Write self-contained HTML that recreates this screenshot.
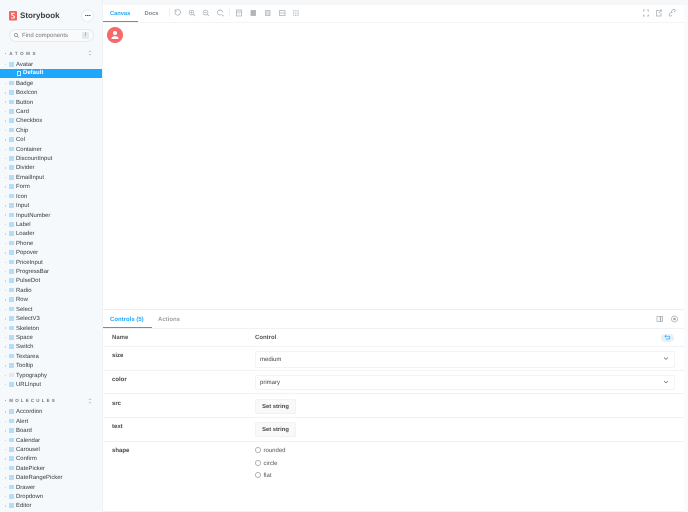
<!DOCTYPE html>
<html><head><meta charset="utf-8">
<style>
html,body{margin:0;padding:0;width:688px;height:512px;overflow:hidden;background:#fff}
#w{position:absolute;left:0;top:0;width:688px;height:512px;overflow:hidden;background:#fff;font-family:"Liberation Sans",sans-serif;color:#333;filter:blur(.35px);text-rendering:geometricPrecision}
*{box-sizing:border-box}
#s{position:absolute;left:0;top:0;width:103px;height:512px;background:#f6f9fc;border-right:1px solid #eef2f5;overflow:hidden}
.r{position:absolute;left:0;width:102px;height:9.4px;line-height:9.4px;font-size:5.95px;color:#333a40}
.r span{position:absolute;left:16px;top:1.7px;white-space:nowrap}
.r i{position:absolute;left:9.2px;top:2.7px;width:4.6px;height:4.6px;background:#b5ddf8;border-radius:.5px}
.r b{position:absolute;left:4.5px;top:4.5px;width:1.5px;height:1.5px;background:#c4ced5;border-radius:50%}
.h{position:absolute;left:9.3px;font-size:4.5px;font-weight:bold;color:#6d757c;white-space:nowrap}
.t{position:absolute;font-size:6px;white-space:nowrap}
.b{font-weight:bold;color:#444}
svg{position:absolute;overflow:visible}
.ln{position:absolute;background:#f0f2f4;height:1px}
.sel{position:absolute;left:255px;width:420px;height:17px;border:1px solid #f2f3f4;border-radius:2px;background:#fff;font-size:6px;line-height:16px;padding-left:4px;color:#444}
.btn{position:absolute;left:255px;width:41px;height:15px;border:1px solid #f1f2f3;border-radius:2px;background:#f9f9f9;font-size:5.8px;font-weight:bold;text-align:center;line-height:14.5px;color:#444}
.rad{position:absolute;width:6px;height:6px;border:.7px solid #b0b0b0;border-radius:50%;background:#fff}
</style></head><body><div id="w">
<div id="s">
<svg style="left:9px;top:10.7px" width="8" height="9.5" viewBox="0 0 8 9.5"><rect width="8" height="9.5" rx="1" fill="#f4645f"/><path d="M5.6 2.6C4.8 1.9 2.6 1.9 2.6 3.3c0 1.6 2.9 1 2.9 2.7 0 1.500-2.300 1.300-3.300.6" fill="none" stroke="#fff" stroke-width="1"/></svg>
<div class="t" style="left:20px;top:10px;font-size:8px;line-height:11px;font-weight:bold;color:#3a3a3a">Storybook</div>
<div style="position:absolute;left:81px;top:9px;width:13px;height:13px;border-radius:50%;background:#fff;border:1px solid #e8ecef"></div>
<div style="position:absolute;left:85px;top:14.7px;width:5.5px;height:1.5px;border-radius:1px;background:repeating-linear-gradient(90deg,#555 0 1.3px,transparent 1.3px 2.1px)"></div>
<div style="position:absolute;left:9px;top:29px;width:85px;height:12.5px;border-radius:7px;background:#f8fafc;border:1px solid #e6eaed"></div>
<svg style="left:13.5px;top:32.5px" width="5" height="5" viewBox="0 0 5 5"><circle cx="2" cy="2" r="1.6" fill="none" stroke="#777" stroke-width=".6"/><path d="M3.2 3.2L4.7 4.7" stroke="#777" stroke-width=".6"/></svg>
<div class="t" style="left:22px;top:31.5px;line-height:8px;color:#777">Find components</div>
<div style="position:absolute;left:82px;top:32px;width:7px;height:6.5px;background:#e6e8ea;border-radius:1px;font-size:5px;line-height:6.5px;text-align:center;color:#666">/</div>

<div style="position:absolute;left:4.5px;top:52.5px;width:1.4px;height:1px;background:#aab"></div>
<div class="h" style="top:50.5px;line-height:6px;letter-spacing:2.6px">ATOMS</div>
<svg style="left:87.5px;top:50px" width="4" height="6" viewBox="0 0 4 6"><path d="M.8 2L2 .8 3.2 2M.8 4L2 5.2 3.2 4" fill="none" stroke="#888" stroke-width=".5"/></svg>

<div class="r" style="top:59.3px"><b></b><i></i><span>Avatar</span></div>
<div style="position:absolute;left:0;top:68.7px;width:102px;height:9.4px;background:#1ea7fd"></div>
<div style="position:absolute;left:16.5px;top:71.2px;width:4px;height:4.4px;border:.7px solid #d0ecff"></div>
<div class="t" style="left:23px;top:70.3px;line-height:7px;color:#fff;font-weight:bold">Default</div>
<div class="r" style="top:78.1px"><b></b><i></i><span>Badge</span></div>
<div class="r" style="top:87.5px"><b></b><i></i><span>BoxIcon</span></div>
<div class="r" style="top:96.9px"><b></b><i></i><span>Button</span></div>
<div class="r" style="top:106.4px"><b></b><i></i><span>Card</span></div>
<div class="r" style="top:115.8px"><b></b><i></i><span>Checkbox</span></div>
<div class="r" style="top:125.2px"><b></b><i></i><span>Chip</span></div>
<div class="r" style="top:134.6px"><b></b><i></i><span>Col</span></div>
<div class="r" style="top:144px"><b></b><i></i><span>Container</span></div>
<div class="r" style="top:153.4px"><b></b><i></i><span>DiscountInput</span></div>
<div class="r" style="top:162.8px"><b></b><i></i><span>Divider</span></div>
<div class="r" style="top:172.3px"><b></b><i></i><span>EmailInput</span></div>
<div class="r" style="top:181.7px"><b></b><i></i><span>Form</span></div>
<div class="r" style="top:191.1px"><b></b><i></i><span>Icon</span></div>
<div class="r" style="top:200.5px"><b></b><i></i><span>Input</span></div>
<div class="r" style="top:209.9px"><b></b><i></i><span>InputNumber</span></div>
<div class="r" style="top:219.3px"><b></b><i></i><span>Label</span></div>
<div class="r" style="top:228.7px"><b></b><i></i><span>Loader</span></div>
<div class="r" style="top:238.2px"><b></b><i></i><span>Phone</span></div>
<div class="r" style="top:247.6px"><b></b><i></i><span>Popover</span></div>
<div class="r" style="top:257px"><b></b><i></i><span>PriceInput</span></div>
<div class="r" style="top:266.4px"><b></b><i></i><span>ProgressBar</span></div>
<div class="r" style="top:275.8px"><b></b><i></i><span>PulseDot</span></div>
<div class="r" style="top:285.2px"><b></b><i></i><span>Radio</span></div>
<div class="r" style="top:294.6px"><b></b><i></i><span>Row</span></div>
<div class="r" style="top:304.1px"><b></b><i></i><span>Select</span></div>
<div class="r" style="top:313.5px"><b></b><i></i><span>SelectV3</span></div>
<div class="r" style="top:322.9px"><b></b><i></i><span>Skeleton</span></div>
<div class="r" style="top:332.3px"><b></b><i></i><span>Space</span></div>
<div class="r" style="top:341.7px"><b></b><i></i><span>Switch</span></div>
<div class="r" style="top:351.1px"><b></b><i></i><span>Textarea</span></div>
<div class="r" style="top:360.5px"><b></b><i></i><span>Tooltip</span></div>
<div class="r" style="top:370px"><b></b><i style="background:#e6e9ec"></i><span>Typography</span></div>
<div class="r" style="top:379.4px"><b></b><i></i><span>URLInput</span></div>

<div style="position:absolute;left:4.5px;top:399.5px;width:1.4px;height:1px;background:#aab"></div>
<div class="h" style="top:397.5px;line-height:6px;letter-spacing:2.15px">MOLECULES</div>
<svg style="left:87.5px;top:397.5px" width="4" height="6" viewBox="0 0 4 6"><path d="M.8 2L2 .8 3.2 2M.8 4L2 5.2 3.2 4" fill="none" stroke="#888" stroke-width=".5"/></svg>

<div class="r" style="top:406.8px"><b></b><i></i><span>Accordion</span></div>
<div class="r" style="top:416.2px"><b></b><i></i><span>Alert</span></div>
<div class="r" style="top:425.6px"><b></b><i></i><span>Board</span></div>
<div class="r" style="top:435px"><b></b><i></i><span>Calendar</span></div>
<div class="r" style="top:444.4px"><b></b><i></i><span>Carousel</span></div>
<div class="r" style="top:453.8px"><b></b><i></i><span>Confirm</span></div>
<div class="r" style="top:463.2px"><b></b><i></i><span>DatePicker</span></div>
<div class="r" style="top:472.6px"><b></b><i></i><span>DateRangePicker</span></div>
<div class="r" style="top:482px"><b></b><i></i><span>Drawer</span></div>
<div class="r" style="top:491.4px"><b></b><i></i><span>Dropdown</span></div>
<div class="r" style="top:500.8px"><b></b><i></i><span>Editor</span></div>
</div>

<!-- toolbar -->
<div style="position:absolute;left:103px;top:0;width:585px;height:5px;background:#f6f7f9"></div>
<div style="position:absolute;left:103px;top:21.5px;width:585px;height:1.5px;background:#f3f4f5"></div>
<div style="position:absolute;left:684px;top:5px;width:4px;height:507px;background:#fafbfc"></div>
<div class="t" style="left:110px;top:10.5px;line-height:7px;color:#1ea7fd;font-weight:bold;font-size:5.7px">Canvas</div>
<div class="t" style="left:144.5px;top:10.5px;line-height:7px;color:#80868b;font-weight:bold;font-size:5.7px">Docs</div>
<div style="position:absolute;left:103px;top:20.7px;width:35px;height:1.5px;background:#1ea7fd"></div>
<div style="position:absolute;left:168.5px;top:8px;width:1px;height:9px;background:#eef0f2"></div>
<div style="position:absolute;left:229px;top:8px;width:1px;height:9px;background:#eef0f2"></div>
<svg style="left:0;top:0" width="688" height="30" viewBox="0 0 688 30" fill="none" stroke="#a4abb1" stroke-width=".7">
<path d="M175 12a2.800 2.800 0 1 0 1-1.800l-1 .7M175 9.500v1.800h1.800"/>
<circle cx="191.500" cy="12.500" r="2.400"/><path d="M193.300 14.300l1.700 1.700M190.400 12.500h2.200M191.500 11.400v2.200"/>
<circle cx="205.500" cy="12.500" r="2.400"/><path d="M207.300 14.300l1.700 1.700M204.400 12.500h2.200"/>
<path d="M222.500 12.500a2.500 2.500 0 1 0-1 2M222 14.500l1.800 1.700M218.500 10l1 1"/>
<rect x="236.500" y="10" width="5" height="6"/><path d="M236.500 12h5M238.500 14h1"/>
<rect x="251" y="10.500" width="4.500" height="5" fill="#b0b6bb"/>
<rect x="265.500" y="10.500" width="4.500" height="5"/><path d="M266 12h3.500M266 14h3.500"/>
<rect x="279.500" y="10.500" width="5.500" height="5"/><path d="M279.500 13h5.500"/>
<rect x="293.500" y="10.500" width="5" height="5" stroke-dasharray="1 .8"/><path d="M296 10.500v5M293.500 13h5" stroke-dasharray="1 .8"/>
<path d="M643.500 11.500v-1.500h1.500M647 10h1.500v1.500M648.500 14.500v1.500h-1.500M645 16h-1.500v-1.500"/>
<path d="M661 13v3h-4.500v-5.500h3M659 13l2.500-3M660 10h1.500v1.500"/>
<path d="M672 15l-.8.8a1.200 1.200 0 0 1-1.700-1.700l1.200-1.200a1.200 1.200 0 0 1 1.700 0M674 12l.8-.8a1.200 1.200 0 0 0-1.700-1.700l-1.200 1.200a1.200 1.200 0 0 0 0 1.700"/>
</svg>

<!-- avatar -->
<div style="position:absolute;left:107px;top:27px;width:16px;height:16px;border-radius:50%;background:#f8686a"></div>
<svg style="left:107px;top:27px" width="16" height="16" viewBox="0 0 16 16"><circle cx="8" cy="6" r="2" fill="#fff"/><path d="M4.500 12v-.8c0-1.300 1.700-2 3.500-2s3.500.7 3.500 2v.8z" fill="#fff"/></svg>

<!-- panel -->
<div style="position:absolute;left:103px;top:309px;width:581px;height:203px;background:#fff;border-top:1px solid #eceef1"></div>
<div class="ln" style="left:103px;top:327.500px;width:581px"></div>
<div style="position:absolute;left:103px;top:326.500px;width:48.500px;height:1.500px;background:#1ea7fd"></div>
<div class="t" style="left:110px;top:315.500px;line-height:8px;color:#1ea7fd;font-weight:bold">Controls (5)</div>
<div class="t" style="left:158px;top:315.500px;line-height:8px;color:#a0a0a0;font-weight:bold">Actions</div>
<svg style="left:0;top:0" width="688" height="330" viewBox="0 0 688 330" fill="none" stroke="#a4abb1" stroke-width=".7">
<rect x="657" y="316.500" width="5.500" height="5"/><path d="M660.500 316.500v5" stroke-width="1.300"/>
<circle cx="674.500" cy="319" r="3"/><circle cx="674.500" cy="319" r="1.300" fill="#a0a6ab" stroke="none"/>
</svg>

<div class="t b" style="left:112px;top:333.500px;line-height:8px;color:#555">Name</div>
<div class="t b" style="left:255px;top:333.500px;line-height:8px;color:#555">Control</div>
<div style="position:absolute;left:661px;top:333.500px;width:13px;height:8px;border-radius:4px;background:#e4f1fa"></div>
<svg style="left:664px;top:335px" width="7" height="5" viewBox="0 0 7 5" fill="none" stroke="#1ea7fd" stroke-width=".7"><path d="M1 1.200h3.500a1.400 1.400 0 0 1 0 2.800H2M2 .2L1 1.200l1 1"/></svg>
<div class="ln" style="left:103px;top:345.500px;width:581px"></div>

<div class="t b" style="left:112px;top:352px;line-height:8px">size</div>
<div class="sel" style="top:350.500px">medium</div>
<div class="ln" style="left:103px;top:369.500px;width:581px"></div>
<div class="t b" style="left:112px;top:376px;line-height:8px">color</div>
<div class="sel" style="top:374.500px;height:15px;line-height:14px">primary</div>
<div class="ln" style="left:103px;top:393px;width:581px"></div>
<svg style="left:0;top:340px" width="688" height="60" viewBox="0 340 688 60" fill="none" stroke="#777" stroke-width=".8"><path d="M664 357.500l2 1.800 2-1.800M664 381l2 1.800 2-1.800"/></svg>

<div class="t b" style="left:112px;top:399.500px;line-height:8px">src</div>
<div class="btn" style="top:398.500px">Set string</div>
<div class="ln" style="left:103px;top:417px;width:581px"></div>
<div class="t b" style="left:112px;top:423px;line-height:8px">text</div>
<div class="btn" style="top:422px">Set string</div>
<div class="ln" style="left:103px;top:440.500px;width:581px"></div>
<div class="t b" style="left:112px;top:447px;line-height:8px">shape</div>
<div class="rad" style="left:255px;top:447px"></div>
<div class="t" style="left:263.500px;top:447px;line-height:8px;color:#555">rounded</div>
<div class="rad" style="left:255px;top:459.500px"></div>
<div class="t" style="left:263.500px;top:459.500px;line-height:8px;color:#555">circle</div>
<div class="rad" style="left:255px;top:472px"></div>
<div class="t" style="left:263.500px;top:472px;line-height:8px;color:#555">flat</div>
<div class="ln" style="left:103px;top:511px;width:581px"></div>
</div></body></html>
